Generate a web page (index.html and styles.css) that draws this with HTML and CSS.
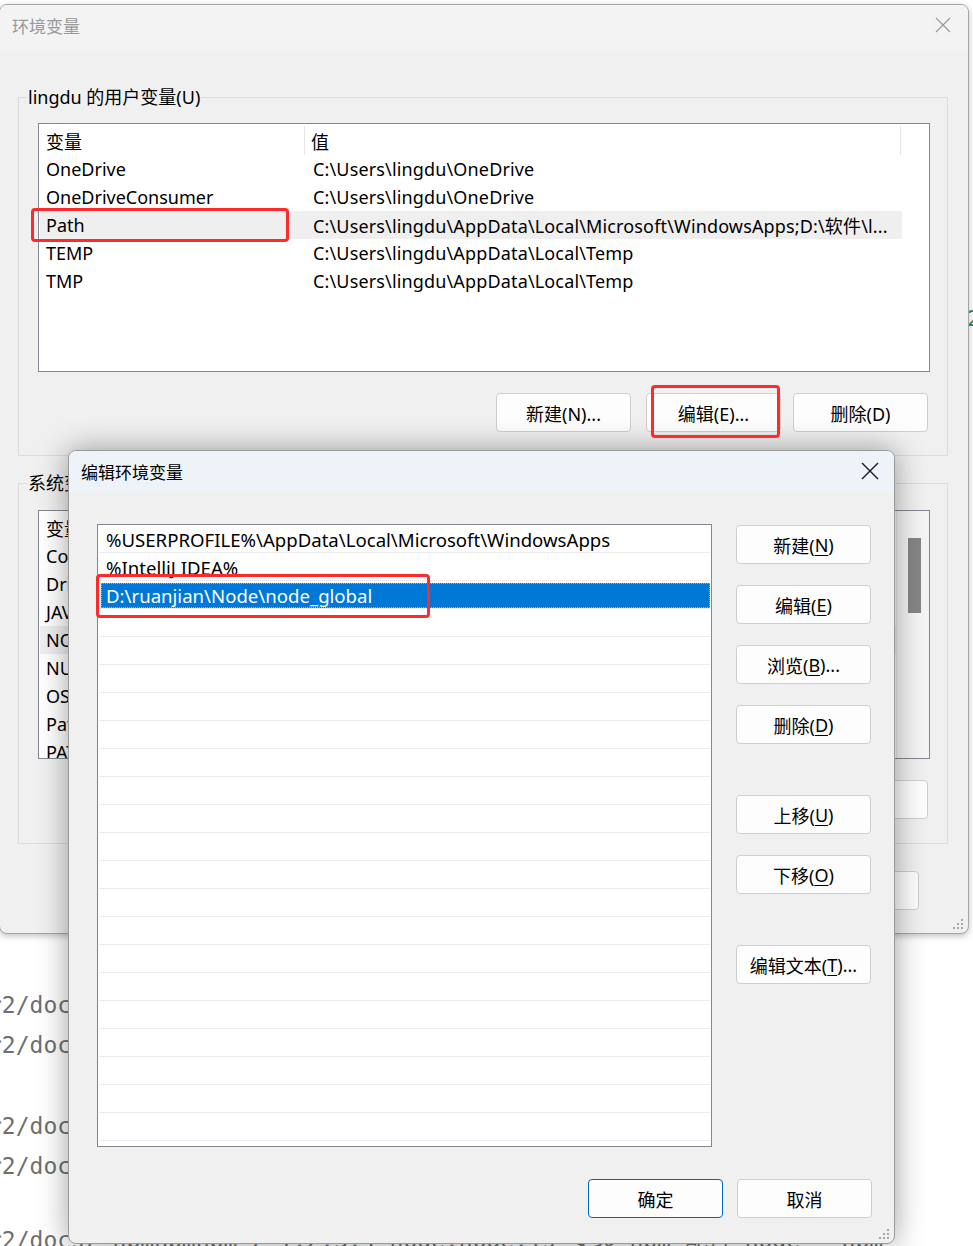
FILE: index.html
```html
<!DOCTYPE html>
<html lang="zh-CN">
<head>
<meta charset="utf-8">
<title>环境变量</title>
<link rel="stylesheet" href="styles.css">
</head>
<body>
<div class="desktop">
  <div class="bg-doc">
    <div class="doc-line l1">r2/docs/guide/node</div>
    <div class="doc-line l2">r2/docs/guide/node</div>
    <div class="doc-line l3">r2/docs/guide/node</div>
    <div class="doc-line l4">r2/docs/guide/node</div>
    <div class="doc-line l5">r2/docs/ npmnpmnpm / 1.2.3.4 node.node.js 安装 npm 配置 node - npm</div>
  </div>
  <div class="side-mark">2</div>

  <div class="win env">
    <div class="titlebar inactive">
      <span class="title">环境变量</span>
      <svg class="close" width="16" height="16" viewBox="0 0 16 16"><path d="M1 1L15 15M15 1L1 15" stroke="#9a9a9a" stroke-width="1.2" fill="none"/></svg>
    </div>
    <div class="env-body">
      <fieldset class="group g-user">
        <legend>lingdu 的用户变量(U)</legend>
        <div class="listview">
          <div class="lv-head">
            <span class="c1">变量</span><span class="c2">值</span><span class="c3"></span>
          </div>
          <div class="lv-row"><span class="c1">OneDrive</span><span class="c2">C:\Users\lingdu\OneDrive</span></div>
          <div class="lv-row"><span class="c1">OneDriveConsumer</span><span class="c2">C:\Users\lingdu\OneDrive</span></div>
          <div class="lv-row hl"><span class="c1">Path</span><span class="c2">C:\Users\lingdu\AppData\Local\Microsoft\WindowsApps;D:\软件\l...</span></div>
          <div class="lv-row"><span class="c1">TEMP</span><span class="c2">C:\Users\lingdu\AppData\Local\Temp</span></div>
          <div class="lv-row"><span class="c1">TMP</span><span class="c2">C:\Users\lingdu\AppData\Local\Temp</span></div>
        </div>
        <div class="btn-row">
          <button class="btn">新建(N)...</button>
          <button class="btn">编辑(E)...</button>
          <button class="btn">删除(D)</button>
        </div>
      </fieldset>

      <fieldset class="group g-sys">
        <legend>系统变量(S)</legend>
        <div class="listview sys">
          <div class="sys-rows">
            <div class="lv-head">
              <span class="c1">变量</span><span class="c2">值</span>
            </div>
            <div class="lv-row"><span class="c1">ComSpec</span><span class="c2">C:\Windows\system32\cmd.exe</span></div>
            <div class="lv-row"><span class="c1">DriverData</span><span class="c2">C:\Windows\System32\Drivers\DriverData</span></div>
            <div class="lv-row"><span class="c1">JAVA_HOME</span><span class="c2">D:\Java\jdk1.8</span></div>
            <div class="lv-row hl"><span class="c1">NODE_PATH</span><span class="c2">D:\ruanjian\Node\node_global\node_modules</span></div>
            <div class="lv-row"><span class="c1">NUMBER_OF_PROCESSORS</span><span class="c2">16</span></div>
            <div class="lv-row"><span class="c1">OS</span><span class="c2">Windows_NT</span></div>
            <div class="lv-row"><span class="c1">Path</span><span class="c2">%JAVA_HOME%\bin;C:\Windows\system32</span></div>
            <div class="lv-row"><span class="c1">PATHEXT</span><span class="c2">.COM;.EXE;.BAT;.CMD</span></div>
          </div>
          <div class="vscroll"><div class="thumb"></div></div>
        </div>
        <div class="btn-row">
          <button class="btn">新建(W)...</button>
          <button class="btn">编辑(I)...</button>
          <button class="btn">删除(L)</button>
        </div>
      </fieldset>

      <div class="footer env-footer">
        <button class="btn">确定</button>
        <button class="btn">取消</button>
      </div>
    </div>
    <svg class="grip" width="10" height="10" viewBox="0 0 10 10"><g fill="#a8a8a8"><rect x="8" y="0" width="2" height="2"/><rect x="4" y="4" width="2" height="2"/><rect x="8" y="4" width="2" height="2"/><rect x="0" y="8" width="2" height="2"/><rect x="4" y="8" width="2" height="2"/><rect x="8" y="8" width="2" height="2"/></g></svg>
  </div>

  <div class="win edit">
    <div class="titlebar active">
      <span class="title">编辑环境变量</span>
      <svg class="close" width="18" height="18" viewBox="0 0 18 18"><path d="M1 1L17 17M17 1L1 17" stroke="#1a1a1a" stroke-width="1.4" fill="none"/></svg>
    </div>
    <div class="edit-body">
      <div class="edit-main">
        <div class="pathlist">
          <div class="p-row">%USERPROFILE%\AppData\Local\Microsoft\WindowsApps</div>
          <div class="p-row">%IntelliJ IDEA%</div>
          <div class="p-row sel"><span class="sel-box">D:\ruanjian\Node\node_global</span></div>
          <div class="p-row"></div><div class="p-row"></div><div class="p-row"></div><div class="p-row"></div>
          <div class="p-row"></div><div class="p-row"></div><div class="p-row"></div><div class="p-row"></div>
          <div class="p-row"></div><div class="p-row"></div><div class="p-row"></div><div class="p-row"></div>
          <div class="p-row"></div><div class="p-row"></div><div class="p-row"></div><div class="p-row"></div>
          <div class="p-row"></div><div class="p-row"></div><div class="p-row"></div>
        </div>
        <div class="side-btns">
          <button class="btn">新建(<u>N</u>)</button>
          <button class="btn">编辑(<u>E</u>)</button>
          <button class="btn">浏览(<u>B</u>)...</button>
          <button class="btn">删除(<u>D</u>)</button>
          <button class="btn spaced">上移(<u>U</u>)</button>
          <button class="btn">下移(<u>O</u>)</button>
          <button class="btn spaced">编辑文本(<u>T</u>)...</button>
        </div>
      </div>
      <div class="footer edit-footer">
        <button class="btn primary">确定</button>
        <button class="btn">取消</button>
      </div>
    </div>
    <svg class="grip" width="10" height="10" viewBox="0 0 10 10"><g fill="#a8a8a8"><rect x="8" y="0" width="2" height="2"/><rect x="4" y="4" width="2" height="2"/><rect x="8" y="4" width="2" height="2"/><rect x="0" y="8" width="2" height="2"/><rect x="4" y="8" width="2" height="2"/><rect x="8" y="8" width="2" height="2"/></g></svg>
  </div>

  <div class="mark mark-path"></div>
  <div class="mark mark-edit"></div>
  <div class="mark mark-node"></div>
</div>
</body>
</html>
```

FILE: styles.css
```css
* { box-sizing: border-box; }
html, body { margin: 0; padding: 0; }
body {
  width: 973px;
  height: 1246px;
  overflow: hidden;
  background: #ffffff;
  font-family: "Segoe UI", "Noto Sans", "Noto Sans CJK SC", sans-serif;
  font-size: 18px;
  color: #000;
}
.desktop {
  position: relative;
  width: 973px;
  height: 1246px;
  overflow: hidden;
  background: #ffffff;
}

/* background page */
.bg-doc {
  padding-top: 988px;
  margin-left: -12px;
  font-family: "DejaVu Sans Mono", monospace;
  font-size: 23px;
  color: #6f6f6f;
  white-space: nowrap;
}
.doc-line { height: 34px; line-height: 34px; }
.l2 { margin-top: 6px; }
.l3 { margin-top: 47px; }
.l4 { margin-top: 6px; }
.l5 { margin-top: 40px; }
.side-mark {
  position: absolute;
  left: 967px;
  top: 306px;
  font-family: "DejaVu Sans Mono", monospace;
  font-size: 22px;
  color: #2e8b57;
}

/* windows */
.win {
  position: absolute;
  background: #f0f0f0;
  border-radius: 8px;
  overflow: hidden;
}
.env {
  left: -1px;
  top: 4px;
  width: 970px;
  height: 930px;
  border: 1px solid #a6a6a6;
  box-shadow: 0 2px 6px rgba(0,0,0,0.25);
}
.edit {
  left: 68px;
  top: 450px;
  width: 827px;
  height: 794px;
  border: 1px solid #9a9a9a;
  box-shadow: 0 0 30px rgba(0,0,0,0.38);
}
.titlebar {
  display: flex;
  align-items: center;
  justify-content: space-between;
}
.titlebar.inactive {
  height: 44px;
  background: #f3f3f3;
  padding: 0 17px 4px 12px;
  color: #999999;
  font-size: 17px;
}
.titlebar.active {
  height: 41px;
  background: #eef2f9;
  padding: 0 15px 1px 12px;
  color: #000;
  font-size: 17px;
}
.grip { position: absolute; right: 5px; bottom: 4px; }

/* env body */
.env-body {
  padding: 0 20px 0 18px;
}
.group {
  margin: 0;
  border: 1px solid #dcdcdc;
  padding: 0 17px 0 19px;
  min-width: 0;
}
.group legend {
  margin-left: -11px;
  padding: 0 1px;
  line-height: 24px;
  font-size: 18px;
}
.g-user { margin-top: 36px; padding-top: 14px; padding-bottom: 23px; }
.g-sys { margin-top: 15px; padding-top: 15px; padding-bottom: 24px; }

.listview {
  background: #fff;
  border: 1px solid #828790;
  height: 249px;
  overflow: hidden;
}
.lv-head {
  display: flex;
  height: 31px;
  align-items: center;
}
.lv-head .c1 {
  width: 266px;
  padding-left: 7px;
  align-self: stretch;
  display: flex;
  align-items: center;
  border-right: 1px solid #e5e5e5;
  margin: 2px 0 0 0;
}
.lv-head .c2 {
  width: 596px;
  padding-left: 6px;
  align-self: stretch;
  display: flex;
  align-items: center;
  border-right: 1px solid #e5e5e5;
  margin-top: 2px;
}
.lv-row {
  display: flex;
  height: 28px;
  align-items: center;
  white-space: nowrap;
  width: 862px;
  margin-left: 1px;
}
.lv-row .c1 { width: 266px; padding-left: 6px; overflow: hidden; }
.lv-row .c2 { flex: 1; padding-left: 7px; overflow: hidden; letter-spacing: 0.15px; }
.lv-row.hl { background: #efefef; }

.listview.sys { display: flex; }
.sys-rows { flex: 1; min-width: 0; }
.sys .lv-head .c2 { width: auto; flex: 1; border-right: none; }
.sys .lv-row { width: auto; }
.vscroll {
  width: 33px;
  background: #f4f4f4;
  border-left: 1px solid #e6e6e6;
  padding: 27px 8px 0 11px;
}
.thumb { height: 75px; background: #858585; }

.btn-row {
  display: flex;
  justify-content: flex-end;
  margin-top: 21px;
  gap: 12px;
  padding-right: 2px;
}
.btn-row .btn:first-child { margin-right: 3px; }

.btn {
  width: 135px;
  height: 39px;
  font-family: "Segoe UI", "Noto Sans", "Noto Sans CJK SC", sans-serif;
  font-size: 18px;
  color: #000;
  background: #fdfdfd;
  border: 1px solid #cfcfcf;
  border-radius: 4px;
  padding: 0;
  display: flex;
  align-items: center;
  justify-content: center;
}
.btn u { text-decoration-thickness: 1px; text-underline-offset: 3px; }
.btn.primary { border: 1px solid #0067c0; }

.footer {
  display: flex;
  justify-content: flex-end;
  gap: 14px;
}
.env-footer { margin-top: 27px; padding-right: 29px; }

/* edit body */
.edit-body {
  padding: 32px 22px 0 28px;
}
.edit-main {
  display: flex;
  gap: 24px;
}
.pathlist {
  width: 615px;
  height: 623px;
  background: #fff;
  border: 1px solid #828790;
  padding: 0 1px;
  overflow: hidden;
  font-size: 18.6px;
}
.p-row {
  height: 28px;
  border-bottom: 1px solid #ebebeb;
  padding-left: 7px;
  padding-top: 1px;
  line-height: 27px;
  white-space: nowrap;
}
.p-row.sel {
  padding: 2px 0 0 2px;
}
.sel-box {
  display: block;
  height: 25px;
  line-height: 24px;
  background: #0078d7;
  color: #fff;
  padding-left: 4px;
  border: 1px dotted #e0a060;
}
.side-btns {
  display: flex;
  flex-direction: column;
  gap: 21px;
  padding-top: 1px;
}
.side-btns .spaced { margin-top: 30px; }
.edit-footer { margin-top: 32px; gap: 14px; }

/* red annotation marks */
.mark {
  position: absolute;
  border: 3px solid #fd2b2b;
  border-radius: 4px;
}
.mark-path { left: 31px; top: 208px; width: 258px; height: 34px; }
.mark-edit { left: 651px; top: 385px; width: 129px; height: 53px; }
.mark-node { left: 96px; top: 574px; width: 334px; height: 44px; }
```
